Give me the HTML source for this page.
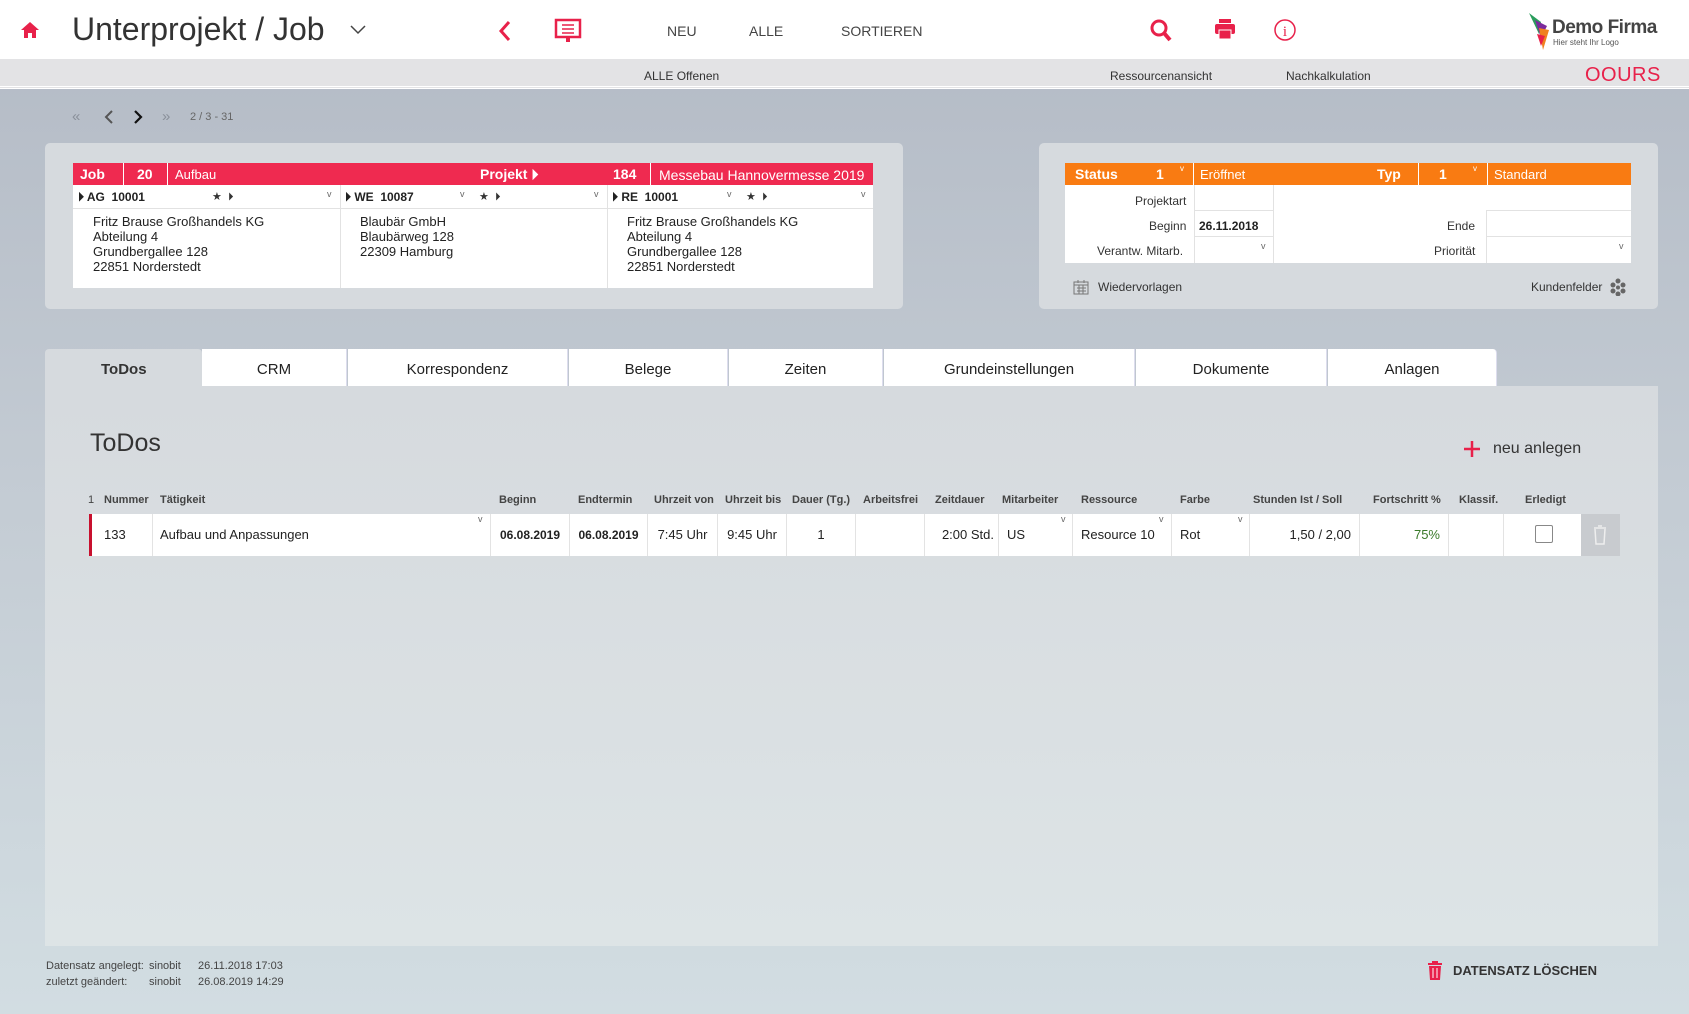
<!DOCTYPE html>
<html><head><meta charset="utf-8"><style>
*{box-sizing:border-box;margin:0;padding:0}
body{width:1689px;height:1014px;overflow:hidden;font-family:"Liberation Sans",Arial,sans-serif;color:#333;background:linear-gradient(#b3bac5 0%,#c4ccd4 50%,#d2dde2 100%);position:relative}
.a{position:absolute;white-space:nowrap}
.top{left:0;top:0;width:1689px;height:59px;background:#fff}
.sub{left:0;top:59px;width:1689px;height:30px;background:#e3e3e5;border-bottom:3px double #fff}
.card{background:#d6dade;border-radius:5px}
.red{background:#ef2a50;color:#fff;font-size:14px}
.or{background:#f97b12;color:#fff;font-size:14px}
.w{background:#fff}
.tab{top:349px;height:37px;background:#fff;font-size:15px;color:#222;text-align:center;line-height:42px;border-right:1px solid #dde}
.th{top:494px;font-size:11px;font-weight:bold;color:#444}
.td{top:514px;height:42px;line-height:42px;font-size:13px;color:#222;border-right:1px solid #e3e3e3}
.v{font-size:9px;color:#666}
</style></head><body>
<div class="a top"></div>
<svg class="a" style="left:20px;top:20px" width="20" height="20" viewBox="0 0 20 20"><path d="M10 2 L19 10 H16 V18 H12 V13 H8 V18 H4 V10 H1 Z" fill="#e8214a"/></svg>
<div class="a" style="left:72px;top:11px;font-size:32px;color:#333">Unterprojekt / Job</div>
<svg class="a" style="left:350px;top:25px" width="16" height="10"><path d="M1 1 L8 8 L15 1" stroke="#444" stroke-width="1.5" fill="none"/></svg>
<svg class="a" style="left:498px;top:20px" width="14" height="22"><path d="M11 2 L3 11 L11 20" stroke="#e8214a" stroke-width="3" fill="none"/></svg>
<svg class="a" style="left:554px;top:18px" width="28" height="26"><rect x="2" y="2" width="24" height="17" stroke="#e8214a" stroke-width="2.5" fill="none"/><path d="M8 7H20M8 11H20M8 15H20" stroke="#e8214a" stroke-width="1.5"/><rect x="12" y="20" width="4" height="4" fill="#e8214a"/></svg>
<div class="a" style="left:667px;top:23px;font-size:14px;color:#444">NEU</div>
<div class="a" style="left:749px;top:23px;font-size:14px;color:#444">ALLE</div>
<div class="a" style="left:841px;top:23px;font-size:14px;color:#444">SORTIEREN</div>
<svg class="a" style="left:1149px;top:18px" width="24" height="26"><circle cx="10" cy="10" r="7" stroke="#e8214a" stroke-width="3" fill="none"/><path d="M15 15 L21 22" stroke="#e8214a" stroke-width="4"/></svg>
<svg class="a" style="left:1214px;top:18px" width="22" height="22"><rect x="5" y="1" width="12" height="4" fill="#e8214a"/><rect x="1" y="6" width="20" height="10" rx="2" fill="#e8214a"/><rect x="5" y="12" width="12" height="9" fill="#e8214a" stroke="#fff" stroke-width="1"/></svg>
<svg class="a" style="left:1273px;top:18px" width="24" height="24"><circle cx="12" cy="12" r="10" stroke="#e8214a" stroke-width="1.5" fill="none"/><text x="12" y="18" font-size="15" text-anchor="middle" fill="#e8214a" font-family="Liberation Serif">i</text></svg>
<svg class="a" style="left:1527px;top:12px" width="30" height="40"><path d="M2 1 L14 10 L12 22 Z" fill="#2a9d5c"/><path d="M8 8 L20 14 L14 26 Z" fill="#7b2b9c"/><path d="M12 16 L22 18 L16 38 Z" fill="#f08020"/><path d="M10 22 L18 24 L14 34Z" fill="#e8214a"/></svg>
<div class="a" style="left:1552px;top:17px;font-size:19px;font-weight:bold;color:#444;letter-spacing:-0.5px">Demo Firma</div>
<div class="a" style="left:1553px;top:38px;font-size:8px;color:#555">Hier steht Ihr Logo</div>
<div class="a sub"></div>
<div class="a" style="left:644px;top:69px;font-size:12px;color:#333">ALLE Offenen</div>
<div class="a" style="left:1110px;top:69px;font-size:12px;color:#333">Ressourcenansicht</div>
<div class="a" style="left:1286px;top:69px;font-size:12px;color:#333">Nachkalkulation</div>
<div class="a" style="left:1585px;top:64px;font-size:20px;color:#e8214a;letter-spacing:0.5px">OOURS</div>

<div class="a" style="left:72px;top:108px;font-size:15px;color:#8a909a">«</div>
<svg class="a" style="left:104px;top:110px" width="10" height="14"><path d="M8 1 L2 7 L8 13" stroke="#555" stroke-width="2" fill="none"/></svg>
<svg class="a" style="left:133px;top:110px" width="10" height="14"><path d="M2 1 L8 7 L2 13" stroke="#111" stroke-width="2.2" fill="none"/></svg>
<div class="a" style="left:162px;top:108px;font-size:15px;color:#8a909a">»</div>
<div class="a" style="left:190px;top:111px;font-size:11px;color:#666">2 / 3 - 31</div>

<div class="a card" style="left:45px;top:143px;width:858px;height:166px"></div>
<div class="a red" style="left:73px;top:163px;width:800px;height:22px"></div>
<div class="a red" style="left:80px;top:166px;font-weight:bold">Job</div>
<div class="a" style="left:123px;top:163px;width:1px;height:22px;background:#fff"></div>
<div class="a red" style="left:137px;top:166px;font-weight:bold">20</div>
<div class="a" style="left:167px;top:163px;width:1px;height:22px;background:#fff"></div>
<div class="a red" style="left:175px;top:167px;font-size:13px">Aufbau</div>
<div class="a red" style="left:480px;top:166px;font-weight:bold">Projekt ⏵</div>
<div class="a red" style="left:613px;top:166px;font-weight:bold">184</div>
<div class="a" style="left:650px;top:163px;width:1px;height:22px;background:#fff"></div>
<div class="a red" style="left:659px;top:167px;font-size:14px">Messebau Hannovermesse 2019</div>
<div class="a w" style="left:73px;top:185px;width:800px;height:103px"></div>
<div class="a" style="left:73px;top:208px;width:800px;height:1px;background:#e2e2e2"></div>
<div class="a" style="left:340px;top:185px;width:1px;height:103px;background:#e2e2e2"></div>
<div class="a" style="left:607px;top:185px;width:1px;height:103px;background:#e2e2e2"></div>
<div class="a" style="left:78px;top:190px;font-size:12px;font-weight:bold;color:#222">⏵ AG &nbsp;10001</div>
<div class="a" style="left:212px;top:190px;font-size:11px">★ &nbsp;⏵</div><div class="a v" style="left:327px;top:189px">v</div>
<div class="a" style="left:345px;top:190px;font-size:12px;font-weight:bold;color:#222">⏵ WE &nbsp;10087</div>
<div class="a v" style="left:460px;top:189px">v</div><div class="a" style="left:479px;top:190px;font-size:11px">★ &nbsp;⏵</div><div class="a v" style="left:594px;top:189px">v</div>
<div class="a" style="left:612px;top:190px;font-size:12px;font-weight:bold;color:#222">⏵ RE &nbsp;10001</div>
<div class="a v" style="left:727px;top:189px">v</div><div class="a" style="left:746px;top:190px;font-size:11px">★ &nbsp;⏵</div><div class="a v" style="left:861px;top:189px">v</div>
<div class="a" style="left:93px;top:214px;font-size:13px;line-height:15px;color:#222">Fritz Brause Großhandels KG<br>Abteilung 4<br>Grundbergallee 128<br>22851 Norderstedt</div>
<div class="a" style="left:360px;top:214px;font-size:13px;line-height:15px;color:#222">Blaubär GmbH<br>Blaubärweg 128<br>22309 Hamburg</div>
<div class="a" style="left:627px;top:214px;font-size:13px;line-height:15px;color:#222">Fritz Brause Großhandels KG<br>Abteilung 4<br>Grundbergallee 128<br>22851 Norderstedt</div>

<div class="a card" style="left:1039px;top:143px;width:619px;height:166px"></div>
<div class="a or" style="left:1065px;top:163px;width:566px;height:22px"></div>
<div class="a or" style="left:1075px;top:166px;font-weight:bold">Status</div>
<div class="a or" style="left:1156px;top:166px;font-weight:bold">1</div>
<div class="a" style="left:1180px;top:164px;font-size:8px;color:#fff">v</div>
<div class="a" style="left:1193px;top:163px;width:1px;height:22px;background:#fff"></div>
<div class="a or" style="left:1200px;top:167px;font-size:13px">Eröffnet</div>
<div class="a or" style="left:1377px;top:166px;font-weight:bold">Typ</div>
<div class="a" style="left:1418px;top:163px;width:1px;height:22px;background:#fff"></div>
<div class="a or" style="left:1439px;top:166px;font-weight:bold">1</div>
<div class="a" style="left:1473px;top:164px;font-size:8px;color:#fff">v</div>
<div class="a" style="left:1487px;top:163px;width:1px;height:22px;background:#fff"></div>
<div class="a or" style="left:1494px;top:167px;font-size:13px">Standard</div>
<div class="a w" style="left:1065px;top:185px;width:566px;height:78px"></div>
<div class="a" style="left:1194px;top:185px;width:1px;height:78px;background:#e2e2e2"></div>
<div class="a" style="left:1273px;top:185px;width:1px;height:78px;background:#e2e2e2"></div>
<div class="a" style="left:1194px;top:210px;width:80px;height:1px;background:#e2e2e2"></div>
<div class="a" style="left:1194px;top:236px;width:80px;height:1px;background:#e2e2e2"></div>
<div class="a" style="left:1486px;top:210px;width:1px;height:53px;background:#e2e2e2"></div>
<div class="a" style="left:1486px;top:210px;width:145px;height:1px;background:#e2e2e2"></div>
<div class="a" style="left:1486px;top:236px;width:145px;height:1px;background:#e2e2e2"></div>
<div class="a" style="left:1135px;top:194px;font-size:12px;color:#333">Projektart</div>
<div class="a" style="left:1149px;top:219px;font-size:12px;color:#333">Beginn</div>
<div class="a" style="left:1199px;top:219px;font-size:12px;font-weight:bold;color:#222">26.11.2018</div>
<div class="a" style="left:1097px;top:244px;font-size:12px;color:#333">Verantw. Mitarb.</div>
<div class="a v" style="left:1261px;top:241px">v</div>
<div class="a" style="left:1447px;top:219px;font-size:12px;color:#333">Ende</div>
<div class="a" style="left:1434px;top:244px;font-size:12px;color:#333">Priorität</div>
<div class="a v" style="left:1619px;top:241px">v</div>
<svg class="a" style="left:1073px;top:279px" width="16" height="16"><rect x="1" y="3" width="14" height="12" fill="none" stroke="#777"/><path d="M1 6H15M4 9H13M4 12H13M5 1V4M11 1V4M6 6V15M10 6V15" stroke="#777"/></svg>
<div class="a" style="left:1098px;top:280px;font-size:12px;color:#333">Wiedervorlagen</div>
<div class="a" style="left:1531px;top:280px;font-size:12px;color:#333">Kundenfelder</div>
<svg class="a" style="left:1610px;top:278px" width="16" height="18"><g fill="#666"><circle cx="8" cy="3" r="2.5"/><circle cx="3" cy="7" r="2.5"/><circle cx="13" cy="7" r="2.5"/><circle cx="3" cy="13" r="2.5"/><circle cx="13" cy="13" r="2.5"/><circle cx="8" cy="16" r="2.5"/><circle cx="8" cy="9.5" r="2"/></g></svg>

<div class="a" style="left:45px;top:349px;width:157px;height:37px;background:#d6dade;border-radius:4px 4px 0 0"></div>
<div class="a" style="left:101px;top:361px;font-size:15px;font-weight:bold;color:#333">ToDos</div>
<div class="a tab" style="left:202px;width:145px">CRM</div>
<div class="a tab" style="left:348px;width:220px">Korrespondenz</div>
<div class="a tab" style="left:569px;width:159px">Belege</div>
<div class="a tab" style="left:729px;width:154px">Zeiten</div>
<div class="a tab" style="left:884px;width:251px">Grundeinstellungen</div>
<div class="a tab" style="left:1136px;width:191px">Dokumente</div>
<div class="a tab" style="left:1328px;width:169px;border-radius:0 4px 0 0">Anlagen</div>
<div class="a" style="left:45px;top:386px;width:1613px;height:560px;background:linear-gradient(#d6dade,#dde4e6)"></div>
<div class="a" style="left:90px;top:429px;font-size:25px;color:#333">ToDos</div>
<svg class="a" style="left:1463px;top:440px" width="18" height="18"><path d="M9 1V17M1 9H17" stroke="#e8214a" stroke-width="2.5"/></svg>
<div class="a" style="left:1493px;top:440px;font-size:16px;color:#333">neu anlegen</div>

<div class="a th" style="left:88px;font-weight:normal">1</div>
<div class="a th" style="left:104px">Nummer</div>
<div class="a th" style="left:160px">Tätigkeit</div>
<div class="a th" style="left:499px">Beginn</div>
<div class="a th" style="left:578px">Endtermin</div>
<div class="a th" style="left:654px">Uhrzeit von</div>
<div class="a th" style="left:725px">Uhrzeit bis</div>
<div class="a th" style="left:792px">Dauer (Tg.)</div>
<div class="a th" style="left:863px">Arbeitsfrei</div>
<div class="a th" style="left:935px">Zeitdauer</div>
<div class="a th" style="left:1002px">Mitarbeiter</div>
<div class="a th" style="left:1081px">Ressource</div>
<div class="a th" style="left:1180px">Farbe</div>
<div class="a th" style="left:1253px">Stunden Ist / Soll</div>
<div class="a th" style="left:1373px">Fortschritt %</div>
<div class="a th" style="left:1459px">Klassif.</div>
<div class="a th" style="left:1525px">Erledigt</div>

<div class="a w" style="left:89px;top:514px;width:1492px;height:42px;border-left:3px solid #c8102e"></div>
<div class="a td" style="left:92px;width:61px;padding-left:12px">133</div>
<div class="a td" style="left:153px;width:338px;padding-left:7px">Aufbau und Anpassungen</div>
<div class="a v" style="left:478px;top:514px">v</div>
<div class="a td" style="left:491px;width:79px;text-align:center;font-weight:bold;font-size:12px">06.08.2019</div>
<div class="a td" style="left:570px;width:78px;text-align:center;font-weight:bold;font-size:12px">06.08.2019</div>
<div class="a td" style="left:648px;width:70px;text-align:center">7:45 Uhr</div>
<div class="a td" style="left:718px;width:69px;text-align:center">9:45 Uhr</div>
<div class="a td" style="left:787px;width:69px;text-align:center">1</div>
<div class="a td" style="left:856px;width:69px"></div>
<div class="a td" style="left:925px;width:74px;text-align:right;padding-right:4px">2:00 Std.</div>
<div class="a td" style="left:999px;width:74px;padding-left:8px">US</div>
<div class="a v" style="left:1061px;top:514px">v</div>
<div class="a td" style="left:1073px;width:99px;padding-left:8px">Resource 10</div>
<div class="a v" style="left:1159px;top:514px">v</div>
<div class="a td" style="left:1172px;width:78px;padding-left:8px">Rot</div>
<div class="a v" style="left:1238px;top:514px">v</div>
<div class="a td" style="left:1250px;width:110px;text-align:right;padding-right:8px">1,50 / 2,00</div>
<div class="a td" style="left:1360px;width:89px;text-align:right;padding-right:8px;color:#3a7a2a">75%</div>
<div class="a td" style="left:1449px;width:55px"></div>
<div class="a" style="left:1535px;top:525px;width:18px;height:18px;border:1px solid #888;border-radius:2px;background:#fff"></div>
<div class="a" style="left:1581px;top:514px;width:39px;height:42px;background:#c8cbcf"></div>
<svg class="a" style="left:1593px;top:525px" width="14" height="20"><path d="M1 3H13M5 1H9M2 4L3 19H11L12 4" stroke="#eee" stroke-width="1.5" fill="none"/></svg>

<div class="a" style="left:46px;top:958px;font-size:11px;line-height:16px;color:#444">Datensatz angelegt:<br>zuletzt geändert:</div>
<div class="a" style="left:149px;top:958px;font-size:11px;line-height:16px;color:#444">sinobit<br>sinobit</div>
<div class="a" style="left:198px;top:958px;font-size:11px;line-height:16px;color:#444">26.11.2018 17:03<br>26.08.2019 14:29</div>
<svg class="a" style="left:1427px;top:961px" width="16" height="20"><path d="M1 3H15M5 1H11" stroke="#e8214a" stroke-width="2"/><path d="M2 5H14L13 19H3Z" fill="#e8214a"/><path d="M6 7V17M10 7V17" stroke="#fff"/></svg>
<div class="a" style="left:1453px;top:963px;font-size:13px;font-weight:bold;color:#333">DATENSATZ LÖSCHEN</div>
</body></html>
